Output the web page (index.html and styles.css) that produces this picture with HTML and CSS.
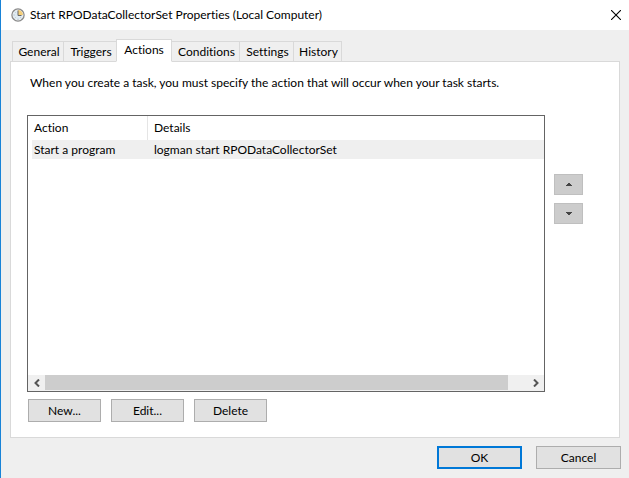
FILE: index.html
```html
<!DOCTYPE html>
<html lang="en">
<head>
<meta charset="utf-8">
<title>Start RPODataCollectorSet Properties (Local Computer)</title>
<link rel="stylesheet" href="styles.css">
</head>
<body>
<main class="dialog">
  <header class="titlebar">
    <svg class="clock" viewBox="0 0 14 14" width="14" height="14" aria-hidden="true">
      <circle cx="7" cy="7" r="6" fill="#dfeaf1" stroke="#8b8b8b" stroke-width="1.5"/>
      <circle cx="7" cy="7" r="5" fill="none" stroke="#f4f4f4" stroke-width=".7"/>
      <path d="M7 7V2A5 5 0 0 1 12 7Z" fill="#f5cf7a"/>
      <path d="M7 2.5V7.5H10.5" fill="none" stroke="#666" stroke-width="1"/>
      <path d="M2.5 7h1M7 10.8v1M3.8 3.8l.6.6M3.8 10.2l.6-.6M10.2 10.2l-.6-.6" stroke="#8aa0ae" stroke-width=".8"/>
    </svg>
    <h1 class="title">Start RPODataCollectorSet Properties (Local Computer)</h1>
    <button class="close" type="button" aria-label="Close">
      <svg viewBox="0 0 10 10" width="10" height="10"><path d="M0 0L10 10M10 0L0 10" stroke="#000" stroke-width="1.1"/></svg>
    </button>
  </header>

  <div class="content">
    <div class="tabs" role="tablist">
      <button class="tab tab-general" type="button" role="tab">General</button>
      <button class="tab tab-triggers" type="button" role="tab">Triggers</button>
      <button class="tab tab-actions selected" type="button" role="tab" aria-selected="true">Actions</button>
      <button class="tab tab-conditions" type="button" role="tab">Conditions</button>
      <button class="tab tab-settings" type="button" role="tab">Settings</button>
      <button class="tab tab-history" type="button" role="tab">History</button>
    </div>

    <section class="panel" role="tabpanel">
      <p class="intro">When you create a task, you must specify the action that will occur when your task starts.</p>
      <div class="work">
        <div class="list">
          <table class="actions">
            <thead>
              <tr><th class="col-action" scope="col">Action</th><th scope="col">Details</th></tr>
            </thead>
            <tbody>
              <tr><td>Start a program</td><td>logman start RPODataCollectorSet</td></tr>
            </tbody>
          </table>
          <div class="scrollbar">
            <button class="arrow" type="button" aria-label="Scroll left">
              <svg viewBox="0 0 6 8" width="6" height="8"><path d="M5 .5L1.5 4L5 7.5" fill="none" stroke="#555" stroke-width="2"/></svg>
            </button>
            <div class="track"><div class="thumb"></div></div>
            <button class="arrow" type="button" aria-label="Scroll right">
              <svg viewBox="0 0 6 8" width="6" height="8"><path d="M1 .5L4.500 4L1 7.5" fill="none" stroke="#555" stroke-width="2"/></svg>
            </button>
          </div>
        </div>
        <div class="order">
          <button class="move" type="button" aria-label="Move up">
            <svg viewBox="0 0 6 3" width="6" height="3" shape-rendering="crispEdges"><path d="M2 0h2v1h1v1h1v1H0V2h1V1h1Z" fill="#444"/></svg>
          </button>
          <button class="move" type="button" aria-label="Move down">
            <svg viewBox="0 0 6 3" width="6" height="3" shape-rendering="crispEdges"><path d="M0 0h6v1H5v1H4v1H2V2H1V1H0Z" fill="#444"/></svg>
          </button>
        </div>
      </div>
      <div class="edit-buttons">
        <button class="button" type="button">New...</button>
        <button class="button" type="button">Edit...</button>
        <button class="button" type="button">Delete</button>
      </div>
    </section>
  </div>

  <footer class="footer">
    <button class="button wide default" type="button">OK</button>
    <button class="button wide" type="button">Cancel</button>
  </footer>
</main>
</body>
</html>
```
FILE: styles.css
```css
* { box-sizing: border-box; }

body {
  margin: 0;
  background: #efefef;
}

body, button {
  color: #000;
  font-family: Lato, "Noto Sans", sans-serif;
  font-size: 12px;
  line-height: 16px;
  font-variant-ligatures: none;
}

button {
  padding: 0;
  border: 0;
  background: none;
}

svg { display: block; }

.dialog {
  display: flex;
  flex-direction: column;
  min-height: 100vh;
  border-left: 1px solid #1883d7;
}

.titlebar {
  display: flex;
  align-items: center;
  height: 30px;
  padding: 0 8px 0 10px;
  background: #fff;
}

.title {
  flex: 1;
  margin: 0 0 0 5px;
  font-size: 12px;
  font-weight: 400;
}

.content {
  flex: 1;
  display: flex;
  flex-direction: column;
  padding: 9px 9px 0;
}

.tabs {
  display: flex;
  align-items: flex-end;
  padding-left: 2px;
  margin-bottom: -1px;
}

.tab {
  height: 21px;
  padding-left: 2px;
  border: 1px solid #d9d9d9;
  border-left-width: 0;
  white-space: nowrap;
}

.tab-general { width: 52px; border-left-width: 1px; }
.tab-triggers { width: 52px; border-right-width: 0; }
.tab-actions { width: 56px; }
.tab-conditions { width: 68px; }
.tab-settings { width: 54px; }
.tab-history { width: 48px; }

.tab.selected {
  position: relative;
  height: 23px;
  padding: 0 0 2px;
  border-left-width: 1px;
  border-bottom-color: #fff;
  background: #fff;
}

.panel {
  flex: 1;
  display: flex;
  flex-direction: column;
  padding: 13px 36px 15px 16px;
  border: 1px solid #d9d9d9;
  background: #fff;
}

.intro {
  margin: 0 0 24px 3px;
  white-space: nowrap;
}

.work {
  flex: 1;
  display: flex;
  gap: 9px;
}

.list {
  flex: 1;
  display: flex;
  flex-direction: column;
  justify-content: space-between;
  border: 1px solid #646464;
}

.actions {
  width: calc(100% - 4px);
  margin-left: 4px;
  border-collapse: separate;
  border-spacing: 0;
  table-layout: fixed;
}

.actions th, .actions td {
  padding: 0 0 0 6px;
  font-weight: 400;
  text-align: left;
}

.actions th:first-child, .actions td:first-child { padding-left: 2px; }
.actions th { height: 24px; }
.actions td { height: 19px; background: #efefef; }
.actions .col-action { width: 116px; border-right: 1px solid #e5e5e5; }

.scrollbar {
  display: flex;
  height: 16px;
  padding-bottom: 1px;
  background: #f0f0f0;
}

.arrow {
  display: grid;
  place-items: center;
  width: 17px;
}

.track {
  flex: 1;
  display: flex;
}

.thumb {
  width: 96%;
  background: #cdcdcd;
}

.order {
  display: flex;
  flex-direction: column;
  gap: 8px;
  padding-top: 59px;
}

.move {
  display: grid;
  place-items: center;
  width: 29px;
  height: 21px;
  border: 1px solid #bfbfbf;
  background: #ccc;
}

.edit-buttons {
  display: flex;
  gap: 10px;
  padding: 7px 0 0 1px;
}

.button {
  width: 73px;
  height: 23px;
  border: 1px solid #adadad;
  background: #e1e1e1;
}

.button.wide { width: 85px; }
.button.default { border: 2px solid #0078d7; }

.footer {
  display: flex;
  justify-content: flex-end;
  gap: 14px;
  padding: 8px 8px 9px;
}
```
